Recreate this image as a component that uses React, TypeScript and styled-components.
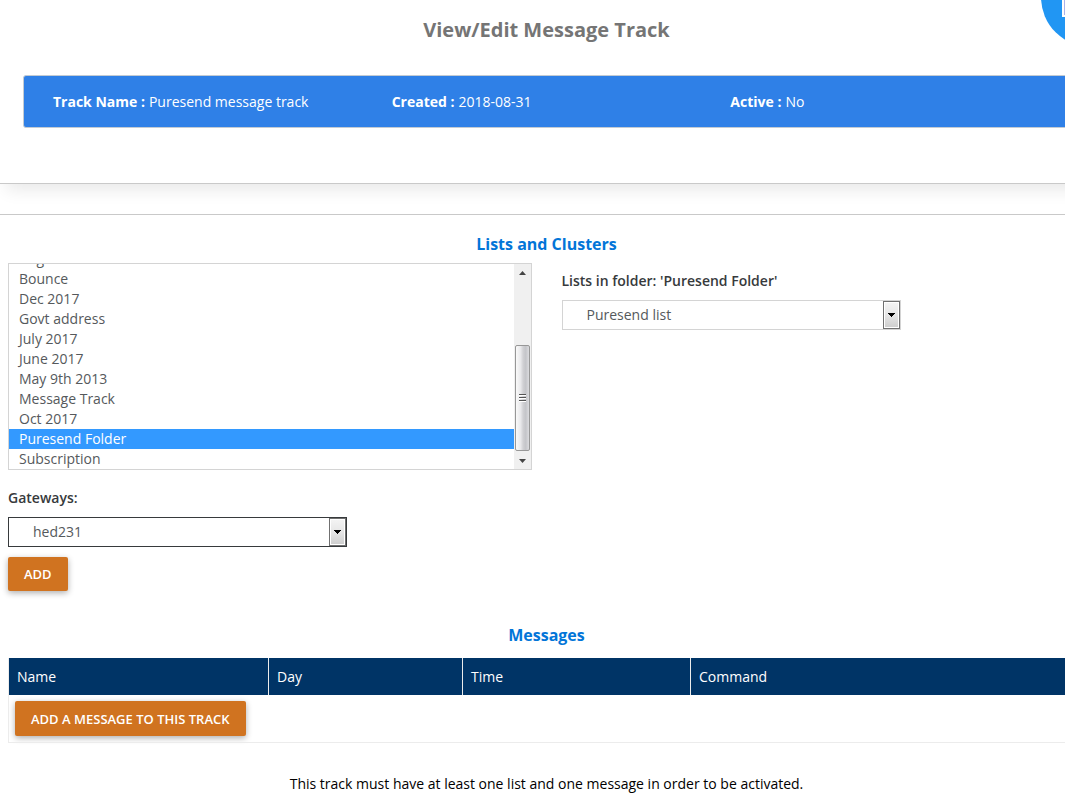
import { useId, useLayoutEffect, useRef } from "react";
import styled, { createGlobalStyle } from "styled-components";

const GlobalStyle = createGlobalStyle`
  *, *::before, *::after { box-sizing: border-box; }
  body {
    margin: 0;
    background: #fff;
    color: #373a3c;
    font-family: "Open Sans", sans-serif;
    font-size: 14px;
    line-height: 20px;
  }
`;

const Viewport = styled.div`
  overflow: hidden;
`;

const Page = styled.div`
  position: relative;
  margin-right: -28px;
`;

const FloatingButton = styled.button`
  position: absolute;
  top: -58px;
  right: -48px;
  width: 100px;
  height: 110px;
  padding: 0;
  border: 0;
  background: none;
`;

const Summary = styled.header`
  height: 184px;
  padding: 16px 23px 0;
  border-bottom: 1px solid #c9c9c9;
  box-shadow: 0 12px 16px -6px rgba(0, 0, 0, 0.09);
`;

const Title = styled.h1`
  margin: 0 0 31px;
  text-align: center;
  font-size: 20px;
  line-height: 28px;
  font-weight: 700;
  color: #757575;
`;

const InfoBar = styled.dl`
  display: grid;
  grid-template-columns: repeat(3, 1fr);
  align-items: center;
  height: 53px;
  margin: 0;
  padding-left: 29px;
  border: 1px solid #c3cbd3;
  border-radius: 3px;
  background: #2f80e7;
  color: #fff;
`;

const InfoItem = styled.div`
  display: flex;
  gap: 4px;
`;

const InfoLabel = styled.dt`
  font-weight: 700;
`;

const InfoValue = styled.dd`
  margin: 0;
`;

const Main = styled.main`
  margin-top: 30px;
  padding: 17px 8px 0;
  border-top: 1px solid #c9c9c9;
`;

const SectionTitle = styled.h2`
  margin: 0;
  text-align: center;
  font-size: 16px;
  line-height: 24px;
  font-weight: 700;
  color: #0275d8;
`;

const Columns = styled.div`
  display: grid;
  grid-template-columns: 1fr 1fr;
  gap: 30px;
  margin-top: 7px;
`;

const Field = styled.div<{ $offset?: number }>`
  padding-top: ${(p) => p.$offset ?? 0}px;
`;

const FieldLabel = styled.label`
  display: block;
  margin-bottom: 9px;
  font-weight: 600;
`;

const ListFrame = styled.div`
  display: flex;
  height: 207px;
  border: 1px solid #d4d4d4;
`;

const FolderSelect = styled.select`
  flex: 1;
  min-width: 0;
  height: 100%;
  margin: 0;
  padding: 0;
  border: 0;
  border-radius: 0;
  outline: 0;
  background: #fff;
  font: inherit;
  scrollbar-width: none;

  option {
    height: 20px;
    min-height: 20px;
    padding: 0 10px;
    line-height: 20px;
    color: #55595c;
    -webkit-text-fill-color: #55595c;
  }

  option:checked {
    background: linear-gradient(#3399ff, #3399ff);
    -webkit-text-fill-color: #fff;
  }
`;

const ScrollTrack = styled.div`
  display: flex;
  flex-direction: column;
  align-items: center;
  width: 17px;
  background: #f0f0f0;
`;

const ScrollArrow = styled.svg`
  flex: none;
  width: 15px;
  height: 18px;
`;

const ScrollThumb = styled.div`
  display: grid;
  place-items: center;
  width: 15px;
  height: 106px;
  margin-top: auto;
  border: 1px solid #979797;
  border-radius: 2px;
  background: linear-gradient(90deg, #fafafa, #e9e9eb 35%, #d0d0d3 55%, #c4c5c9 75%, #dcdcdf);
`;

const DropFrame = styled.div`
  position: relative;
  width: 339px;
  max-width: 100%;
`;

const DropSelect = styled.select<{ $strong?: boolean }>`
  display: block;
  width: 100%;
  height: 30px;
  margin: 0;
  padding: 0 30px 0 24px;
  border: 1px solid ${(p) => (p.$strong ? "#373a3c" : "#d4d4d4")};
  border-radius: 0;
  outline: 0;
  appearance: none;
  background: #fff;
  color: #55595c;
  font: inherit;
`;

const DropArrow = styled.svg`
  position: absolute;
  top: 1px;
  right: 0;
  width: 18px;
  height: 28px;
  pointer-events: none;
`;

const ActionButton = styled.button`
  display: block;
  padding: 7px 16px;
  border: 0;
  border-radius: 2px;
  background: #d07320;
  box-shadow: 0 2px 6px rgba(0, 0, 0, 0.32);
  color: #fff;
  font: inherit;
  font-size: 13px;
  font-weight: 600;
  text-transform: uppercase;
`;

const ListActions = styled.div`
  margin: 10px 0 32px;
`;

const MessageTable = styled.table`
  width: 100%;
  margin-top: 11px;
  border-collapse: collapse;
  border: 1px solid #ececec;
  border-top: 0;
  table-layout: fixed;
`;

const HeadCell = styled.th<{ $width?: number }>`
  width: ${(p) => (p.$width ? `${p.$width}px` : "auto")};
  height: 37px;
  padding: 0 8px;
  border-left: 1px solid #ececec;
  background: #003466;
  color: #fff;
  text-align: left;
  font-weight: 400;
`;

const BodyCell = styled.td`
  padding: 6px;

  ${ActionButton} {
    padding-top: 8px;
  }
`;

const Notice = styled.p`
  margin: 31px 0 20px;
  text-align: center;
  color: #000;
`;

const folders = [
  "Aug 2017",
  "Bounce",
  "Dec 2017",
  "Govt address",
  "July 2017",
  "June 2017",
  "May 9th 2013",
  "Message Track",
  "Oct 2017",
  "Puresend Folder",
  "Subscription",
];

const columns = [
  { name: "Name", width: 260 },
  { name: "Day", width: 194 },
  { name: "Time", width: 228 },
  { name: "Command" },
];

function FolderList() {
  const ref = useRef<HTMLSelectElement>(null);

  useLayoutEffect(() => {
    const toEnd = () => {
      if (ref.current) ref.current.scrollTop = ref.current.scrollHeight;
    };
    toEnd();
    const frame = requestAnimationFrame(() => requestAnimationFrame(toEnd));
    return () => cancelAnimationFrame(frame);
  }, []);

  return (
    <ListFrame>
      <FolderSelect ref={ref} size={10} aria-label="Folders" defaultValue="Puresend Folder">
        {folders.map((f) => (
          <option key={f}>{f}</option>
        ))}
      </FolderSelect>
      <ScrollTrack aria-hidden="true">
        <ScrollArrow viewBox="0 0 15 18">
          <path d="M4 11 7.500 7 11 11z" fill="#444" />
        </ScrollArrow>
        <ScrollThumb>
          <svg width="7" height="8" viewBox="0 0 7 8" shapeRendering="crispEdges">
            <path d="M0 .5h7M0 3.500h7M0 6.500h7" stroke="#555" />
            <path d="M0 1.500h7M0 4.500h7M0 7.500h7" stroke="#fff" />
          </svg>
        </ScrollThumb>
        <ScrollArrow viewBox="0 0 15 18">
          <path d="M4 8h7l-3.500 4z" fill="#444" />
        </ScrollArrow>
      </ScrollTrack>
    </ListFrame>
  );
}

function Dropdown({ label, value, strong }: { label: string; value: string; strong?: boolean }) {
  const id = useId();
  return (
    <>
      <FieldLabel htmlFor={id}>{label}</FieldLabel>
      <DropFrame>
        <DropSelect id={id} $strong={strong} defaultValue={value}>
          <option>{value}</option>
        </DropSelect>
        <DropArrow viewBox="0 0 18 28" aria-hidden="true">
          <defs>
            <linearGradient id={`${id}-face`} x1="0" y1="0" x2="0" y2="1">
              <stop offset="0" stopColor="#f3f3f3" />
              <stop offset=".5" stopColor="#e6e6e6" />
              <stop offset="1" stopColor="#cfcfcf" />
            </linearGradient>
          </defs>
          <rect x=".5" y=".5" width="16" height="27" fill="#fff" stroke="#707070" />
          <rect x="2" y="2" width="13" height="24" fill={`url(#${id}-face)`} />
          <path d="M5 12h7v1h-1v1h-1v1H9v1H8v-1H7v-1H6v-1H5z" fill="#000" shapeRendering="crispEdges" />
        </DropArrow>
      </DropFrame>
    </>
  );
}

function Info({ label, value }: { label: string; value: string }) {
  return (
    <InfoItem>
      <InfoLabel>{label} :</InfoLabel>
      <InfoValue>{value}</InfoValue>
    </InfoItem>
  );
}

export default function App() {
  return (
    <Viewport>
      <GlobalStyle />
      <Page>
        <Summary>
          <Title>View/Edit Message Track</Title>
          <InfoBar>
            <Info label="Track Name" value="Puresend message track" />
            <Info label="Created" value="2018-08-31" />
            <Info label="Active" value="No" />
          </InfoBar>
        </Summary>
        <FloatingButton type="button" aria-label="Open panel">
          <svg width="100" height="110" viewBox="0 0 100 110" aria-hidden="true">
            <circle cx="50" cy="55" r="50" fill="#2196f3" />
            <rect x="22" y="38" width="30" height="36" fill="#a9b2ea" stroke="#fff" strokeWidth="2" />
          </svg>
        </FloatingButton>
        <Main>
          <SectionTitle>Lists and Clusters</SectionTitle>
          <Columns>
            <FolderList />
            <Field $offset={8}>
              <Dropdown label="Lists in folder: 'Puresend Folder'" value="Puresend list" />
            </Field>
          </Columns>
          <Field $offset={18}>
            <Dropdown label="Gateways:" value="hed231" strong />
          </Field>
          <ListActions>
            <ActionButton type="button">Add</ActionButton>
          </ListActions>
          <SectionTitle>Messages</SectionTitle>
          <MessageTable>
            <thead>
              <tr>
                {columns.map((c) => (
                  <HeadCell key={c.name} scope="col" $width={c.width}>
                    {c.name}
                  </HeadCell>
                ))}
              </tr>
            </thead>
            <tbody>
              <tr>
                <BodyCell colSpan={4}>
                  <ActionButton type="button">Add a message to this track</ActionButton>
                </BodyCell>
              </tr>
            </tbody>
          </MessageTable>
          <Notice>This track must have at least one list and one message in order to be activated.</Notice>
        </Main>
      </Page>
    </Viewport>
  );
}
